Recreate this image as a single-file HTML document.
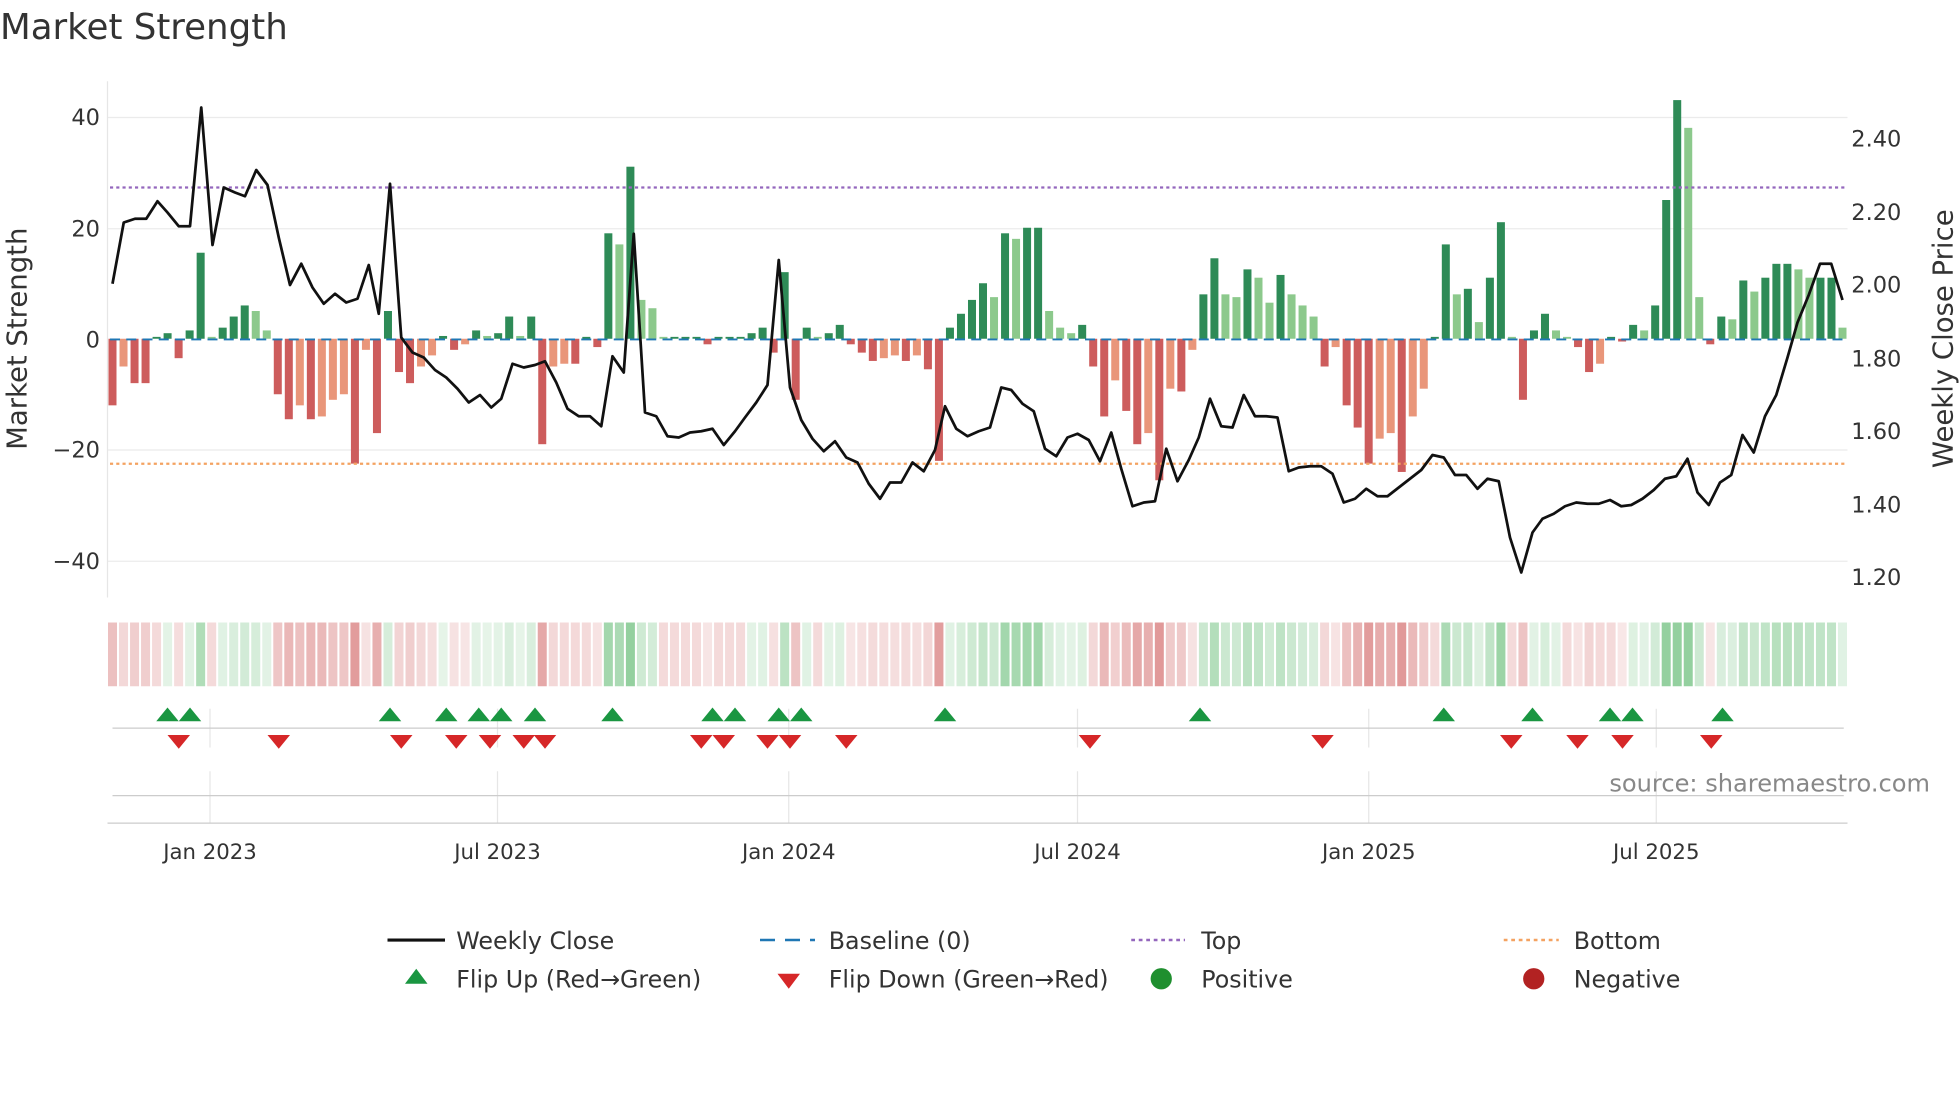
<!DOCTYPE html>
<html><head><meta charset="utf-8"><style>
html,body{margin:0;padding:0;background:#fff;width:1960px;height:1102px;overflow:hidden}
svg{display:block;font-family:"DejaVu Sans","Liberation Sans",sans-serif}
</style></head><body>
<svg id="s" width="1960" height="1102" viewBox="0 0 1568 881.6" xmlns="http://www.w3.org/2000/svg">
<text x="0" y="31" font-size="28.5" fill="#333">Market Strength</text>
<g stroke="#ebebeb" stroke-width="1">
<line x1="86" y1="94" x2="1478" y2="94"/><line x1="86" y1="183" x2="1478" y2="183"/><line x1="86" y1="360" x2="1478" y2="360"/><line x1="86" y1="449" x2="1478" y2="449"/>
</g>
<line x1="86" y1="65" x2="86" y2="478" stroke="#e6e6e6"/>
<g font-size="18" fill="#333" text-anchor="end">
<text x="80" y="100">40</text><text x="80" y="189">20</text><text x="80" y="278">0</text><text x="80" y="366">−20</text><text x="80" y="455">−40</text>
</g>
<g font-size="18" fill="#333">
<text x="1481" y="117">2.40</text><text x="1481" y="176">2.20</text><text x="1481" y="234">2.00</text><text x="1481" y="293">1.80</text><text x="1481" y="351">1.60</text><text x="1481" y="410">1.40</text><text x="1481" y="468">1.20</text>
</g>
<text transform="translate(21,271) rotate(-90)" font-size="22" fill="#333" text-anchor="middle">Market Strength</text>
<text transform="translate(1562,271) rotate(-90)" font-size="22" fill="#333" text-anchor="middle">Weekly Close Price</text>
<g id="bars"></g>
<line x1="88" y1="271.5" x2="1478" y2="271.5" stroke="#1f77b4" stroke-width="1.5" stroke-dasharray="8,5"/>
<line x1="88" y1="150" x2="1478" y2="150" stroke="#9467bd" stroke-width="1.8" stroke-dasharray="2.5,2.5"/>
<line x1="88" y1="371" x2="1478" y2="371" stroke="#f4a261" stroke-width="1.8" stroke-dasharray="2.5,2.5"/>
<polyline id="price" fill="none" stroke="#111" stroke-width="2.2" stroke-linejoin="round"/>
<g id="heat"></g>
<g stroke="#e6e6e6">
<line x1="168" y1="567" x2="168" y2="598"/><line x1="398" y1="567" x2="398" y2="598"/><line x1="631" y1="567" x2="631" y2="598"/><line x1="862" y1="567" x2="862" y2="598"/><line x1="1095" y1="567" x2="1095" y2="598"/><line x1="1325" y1="567" x2="1325" y2="598"/>
<line x1="168" y1="617" x2="168" y2="658"/><line x1="398" y1="617" x2="398" y2="658"/><line x1="631" y1="617" x2="631" y2="658"/><line x1="862" y1="617" x2="862" y2="658"/><line x1="1095" y1="617" x2="1095" y2="658"/><line x1="1325" y1="617" x2="1325" y2="658"/>
</g>
<line x1="90" y1="582.5" x2="1475" y2="582.5" stroke="#ccc"/>
<line x1="90" y1="636.5" x2="1475" y2="636.5" stroke="#ccc"/>
<line x1="86" y1="658.5" x2="1478" y2="658.5" stroke="#ccc"/>
<g id="marks"></g>
<text x="1544" y="633" font-size="19.3" fill="#888" text-anchor="end">source: sharemaestro.com</text>
<g font-size="17" fill="#333" text-anchor="middle">
<text x="168" y="687">Jan 2023</text><text x="398" y="687">Jul 2023</text><text x="631" y="687">Jan 2024</text><text x="862" y="687">Jul 2024</text><text x="1095" y="687">Jan 2025</text><text x="1325" y="687">Jul 2025</text>
</g>
<g font-size="19" fill="#333">
<line x1="310" y1="752" x2="356" y2="752" stroke="#111" stroke-width="2.5"/><text x="365" y="759">Weekly Close</text>
<line x1="608" y1="752" x2="652" y2="752" stroke="#1f77b4" stroke-width="2" stroke-dasharray="12,8"/><text x="663" y="759">Baseline (0)</text>
<line x1="905" y1="752" x2="948" y2="752" stroke="#9467bd" stroke-width="2" stroke-dasharray="3,3"/><text x="961" y="759">Top</text>
<line x1="1203" y1="752" x2="1247" y2="752" stroke="#f4a261" stroke-width="2" stroke-dasharray="3,3"/><text x="1259" y="759">Bottom</text>
<polygon points="333,775 342,787 324,787" fill="#1a9641"/><text x="365" y="790">Flip Up (Red→Green)</text>
<polygon points="622,779 640,779 631,791" fill="#d62728"/><text x="663" y="790">Flip Down (Green→Red)</text>
<circle cx="929" cy="783" r="8.5" fill="#1f8f2f"/><text x="961" y="790">Positive</text>
<circle cx="1227" cy="783" r="8.5" fill="#b22222"/><text x="1259" y="790">Negative</text>
</g>
</svg>
<script>
var V=[-12,-5,-8,-8,0,1,-3.5,1.5,15.5,0,2,4,6,5,1.5,-10,-14.5,-12,-14.5,-14,-11,-10,-22.5,-2,-17,5,-6,-8,-5,-3,0.5,-2,-1,1.5,0.5,1,4,0.5,4,-19,-5,-4.5,-4.5,0,-1.5,19,17,31,7,5.5,0,0,0,0,-1,0,0,0,1,2,-2.5,12,-11,2,0,1,2.5,-1,-2.5,-4,-3.5,-3,-4,-3,-5.5,-22,2,4.5,7,10,7.5,19,18,20,20,5,2,1,2.5,-5,-14,-7.5,-13,-19,-17,-25.5,-9,-9.5,-2,8,14.5,8,7.5,12.5,11,6.5,11.5,8,6,4,-5,-1.5,-12,-16,-22.5,-18,-17,-24,-14,-9,0,17,8,9,3,11,21,0,-11,1.5,4.5,1.5,0,-1.5,-6,-4.5,0,-0.5,2.5,1.5,6,25,43,38,7.5,-1,4,3.5,10.5,8.5,11,13.5,13.5,12.5,11,11,11,2];
var P=[[90,227],[99,178],[108,175],[117,175],[126,161],[134,170],[143,181],[152,181],[161,86],[170,196],[179,150],[188,154],[196,157],[205,136],[214,148],[223,190],[232,228],[241,211],[250,230],[259,243],[268,235],[277,242],[286,239],[295,212],[303,251],[312,147],[321,270],[330,282],[339,286],[348,296],[357,302],[366,311],[375,322],[384,316],[393,326],[401,319],[410,291],[419,294],[428,292],[436,289],[445,306],[454,327],[463,333],[472,333],[481,341],[490,285],[499,298],[507,187],[516,330],[525,333],[534,349],[543,350],[552,346],[561,345],[570,343],[579,356],[588,345],[596,334],[605,322],[614,308],[623,208],[632,310],[641,336],[650,351],[659,361],[668,353],[677,366],[686,370],[695,387],[704,399],[712,386],[721,386],[730,370],[739,377],[748,360],[756,325],[765,343],[774,349],[783,345],[792,342],[801,310],[809,312],[818,323],[827,329],[836,359],[845,365],[854,350],[862,347],[871,352],[880,369],[889,346],[897,375],[906,405],[915,402],[924,401],[933,359],[942,385],[951,368],[959,350],[968,319],[977,341],[986,342],[995,316],[1004,333],[1013,333],[1022,334],[1031,377],[1039,374],[1048,373],[1057,373],[1066,379],[1075,402],[1084,399],[1093,391],[1102,397],[1110,397],[1119,390],[1128,383],[1137,376],[1146,364],[1155,366],[1164,380],[1173,380],[1182,391],[1190,383],[1199,385],[1208,430],[1217,458],[1226,426],[1234,415],[1243,411],[1252,405],[1261,402],[1270,403],[1279,403],[1288,400],[1297,405],[1305,404],[1314,399],[1323,392],[1332,383],[1341,381],[1350,367],[1358,394],[1367,404],[1376,386],[1385,380],[1394,348],[1403,362],[1412,333],[1421,316],[1430,286],[1438,258],[1447,236],[1456,211],[1465,211],[1474,240]];
var NS="http://www.w3.org/2000/svg";
function el(t,a,p){var e=document.createElementNS(NS,t);for(var k in a)e.setAttribute(k,a[k]);p.appendChild(e);return e;}
var n=V.length,step=(1474-90)/(n-1),bars=document.getElementById('bars'),heat=document.getElementById('heat');
for(var i=0;i<n;i++){var v=V[i],x=90+i*step,pv=i?V[i-1]:0;var c;
 if(v>=0)c=(v>=pv)?'#2e8b57':'#8cc98c';else c=(v<=pv)?'#cd5c5c':'#e9967a';
 var h=Math.abs(v)*4.44;if(h<1.5)h=1.5;
 el('rect',{x:x-3.2,y:v>=0?271-h:271,width:6.4,height:h,fill:c},bars);
 var a=Math.min(1,0.22+Math.abs(v)/30);var hc=v>=0?'rgba(60,170,80,'+(a*0.55)+')':'rgba(200,70,70,'+(a*0.55)+')';
 if(Math.abs(v)<0.3)hc='rgba(200,70,70,0.2)';
 el('rect',{x:x-3.6,y:498,width:7.2,height:51,fill:hc},heat);}
document.getElementById('price').setAttribute('points',P.map(function(p){return p.join(',')}).join(' '));
var m=document.getElementById('marks');
[134,152,312,357,383,401,428,490,570,588,623,641,756,960,1155,1226,1288,1306,1378].forEach(function(x){el('polygon',{points:(x)+',566 '+(x+9)+',577 '+(x-9)+',577',fill:'#1a9641'},m);});
[143,223,321,365,392,419,436,561,579,614,632,677,872,1058,1209,1262,1298,1369].forEach(function(x){el('polygon',{points:(x-9)+',588 '+(x+9)+',588 '+x+',599',fill:'#d62728'},m);});
</script>
</body></html>
